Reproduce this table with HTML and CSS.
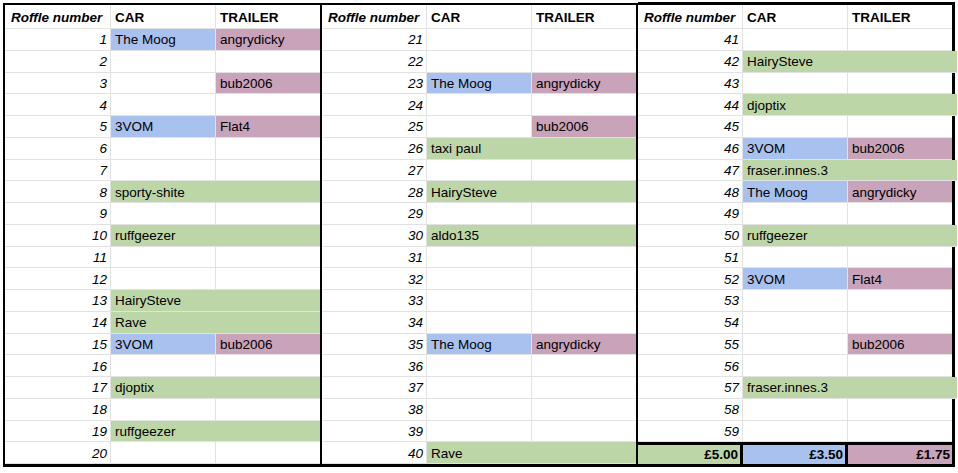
FILE: index.html
```html
<!DOCTYPE html>
<html lang="en">
<head>
    <meta charset="UTF-8">
    <meta name="viewport" content="width=device-width, initial-scale=1.0">
    <title>Roffle numbers</title>
    <link rel="stylesheet" href="styles.css">
</head>
<body>
    <div class="sheet" id="sheet"></div>

    <script>
        // string = one name across CAR + TRAILER (green), array = [car, trailer]
        const blocks = [
            { start: 1, rows: {
                1: ['The Moog', 'angrydicky'], 3: [null, 'bub2006'], 5: ['3VOM', 'Flat4'],
                8: 'sporty-shite', 10: 'ruffgeezer', 13: 'HairySteve', 14: 'Rave',
                15: ['3VOM', 'bub2006'], 17: 'djoptix', 19: 'ruffgeezer'
            }},
            { start: 21, rows: {
                23: ['The Moog', 'angrydicky'], 25: [null, 'bub2006'], 26: 'taxi paul',
                28: 'HairySteve', 30: 'aldo135', 35: ['The Moog', 'angrydicky'], 40: 'Rave'
            }},
            { start: 41, rows: {
                42: 'HairySteve', 44: 'djoptix', 46: ['3VOM', 'bub2006'], 47: 'fraser.innes.3',
                48: ['The Moog', 'angrydicky'], 50: 'ruffgeezer', 52: ['3VOM', 'Flat4'],
                55: [null, 'bub2006'], 57: 'fraser.innes.3'
            }, totals: ['£5.00', '£3.50', '£1.75'] }
        ];

        const sheet = document.getElementById('sheet');

        blocks.forEach((block, b) => {
            let html = `
                <div class="cell head hnum">Roffle number</div>
                <div class="cell head">CAR</div>
                <div class="cell head end">TRAILER</div>
            `;
            const count = block.totals ? 19 : 20;

            for (let n = block.start; n < block.start + count; n++) {
                const row = block.rows[n];
                html += `<div class="cell num">${n}</div>`;
                if (typeof row === 'string') {
                    html += `<div class="cell both end">${row}</div>`;
                } else if (row) {
                    html += `<div class="cell ${row[0] ? 'car' : ''}">${row[0] || ''}</div>`;
                    html += `<div class="cell trl end">${row[1]}</div>`;
                } else {
                    html += '<div class="cell"></div><div class="cell end"></div>';
                }
            }

            if (block.totals) {
                html += `
                    <div class="cell tot green">${block.totals[0]}</div>
                    <div class="cell tot car">${block.totals[1]}</div>
                    <div class="cell tot trl end">${block.totals[2]}</div>
                `;
            }

            const el = document.createElement('div');
            el.className = 'block' + (b === blocks.length - 1 ? ' last' : '');
            el.innerHTML = html;
            sheet.appendChild(el);
        });
    </script>
</body>
</html>
```

FILE: styles.css
```css
body {
    margin: 0;
    padding: 3px 0 0 3px;
    background: #fff;
    color: #000;
    font-family: "Liberation Sans", Arial, sans-serif;
    font-size: 13.5px;
}
.sheet {
    display: flex;
}
.block {
    display: grid;
    grid-template-columns: 105px 105px 104px;
    grid-template-rows: 24px;
    grid-auto-rows: 21.75px;
    border-top: 2px solid #000;
    border-bottom: 3px solid #000;
    border-right: 2px solid #000;
}
.block:first-child {
    grid-template-columns: 106px 105px 104px;
    border-left: 2px solid #000;
}
.block.last {
    border-top-width: 3px;
    border-right-width: 3px;
    margin-top: -1px;
}
.cell {
    display: flex;
    align-items: center;
    padding: 1px 4px 0;
    border-bottom: 1px solid #e2e2e2;
    border-right: 1px solid #e2e2e2;
    white-space: nowrap;
    overflow: hidden;
}
.cell.end {
    border-right: 0;
}
.head {
    font-weight: bold;
    padding-top: 2px;
}
.hnum {
    font-style: italic;
    padding-left: 6px;
}
.num {
    justify-content: flex-end;
    font-style: italic;
    padding-right: 3px;
}
.car {
    background: #a9c1ef;
}
.trl {
    background: #c8a3b9;
}
.both,
.green {
    background: #bdd6a8;
}
.both {
    grid-column: span 2;
}
.last .both {
    margin-right: -5px;
}
.tot {
    justify-content: flex-end;
    font-weight: bold;
    padding: 0 2px 0 0;
    border-top: 3px solid #000;
    border-right: 3px solid #000;
    border-bottom: 0;
}
.tot.end {
    border-right: 0;
}
```
